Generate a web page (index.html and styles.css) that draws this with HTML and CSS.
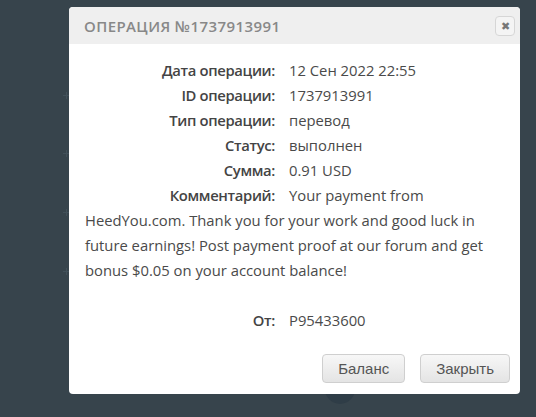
FILE: index.html
```html
<!DOCTYPE html>
<html lang="ru">
<head>
    <meta charset="UTF-8">
    <title>Операция</title>
    <link rel="stylesheet" href="styles.css">
</head>
<body>
    <div class="backdrop">
        <div class="dot"></div>
        <div class="plus" style="top: 92px"></div>
        <div class="plus" style="top: 150px"></div>
        <div class="plus" style="top: 209px"></div>
        <div class="plus" style="top: 268px"></div>

        <div class="dialog">
            <div class="dialog-head">
                <span class="dialog-title">Операция №1737913991</span>
                <button class="close-btn">&#10006;</button>
            </div>
            <div class="dialog-body">
                <div class="row"><span class="label">Дата операции:</span>12 Сен 2022 22:55</div>
                <div class="row"><span class="label">ID операции:</span>1737913991</div>
                <div class="row"><span class="label">Тип операции:</span>перевод</div>
                <div class="row"><span class="label">Статус:</span>выполнен</div>
                <div class="row"><span class="label">Сумма:</span>0.91 USD</div>
                <div class="row"><span class="label">Комментарий:</span>Your payment from HeedYou.com. Thank you for your work and good luck in future earnings! Post payment proof at our forum and get bonus $0.05 on your account balance!</div>
                <div class="row empty"></div>
                <div class="row"><span class="label">От:</span>P95433600</div>
            </div>
            <div class="dialog-foot">
                <button class="btn">Баланс</button>
                <button class="btn">Закрыть</button>
            </div>
        </div>
    </div>
</body>
</html>
```

FILE: styles.css
```css
body {
    margin: 0;
    background-color: #37444c;
    font-family: "Open Sans", "DejaVu Sans", sans-serif;
}
.backdrop {
    position: relative;
    width: 536px;
    height: 417px;
    overflow: hidden;
    padding-top: 7px;
    box-sizing: border-box;
}
.dot {
    position: absolute;
    left: 325px;
    top: 374px;
    width: 30px;
    height: 30px;
    border-radius: 50%;
    background-color: #2f3d47;
}
.plus {
    position: absolute;
    left: 63px;
    width: 7px;
    height: 7px;
    background:
        linear-gradient(#42515a, #42515a) center / 7px 1px no-repeat,
        linear-gradient(#42515a, #42515a) center / 1px 7px no-repeat;
}
.dialog {
    position: relative;
    margin-left: 69px;
    width: 451px;
    background-color: #fff;
    border-radius: 4px;
    overflow: hidden;
}
.dialog-head {
    background-color: #efefef;
    height: 37px;
    display: flex;
    align-items: center;
    justify-content: space-between;
    padding: 0 5px 0 15px;
}
.dialog-title {
    text-transform: uppercase;
    color: #888;
    font-size: 15px;
    font-weight: 600;
    letter-spacing: 0.4px;
}
.close-btn {
    width: 20px;
    height: 20px;
    padding: 0;
    border: 1px solid #d6d6d6;
    border-radius: 4px;
    background-color: #f4f4f4;
    color: #777;
    font-size: 11px;
    line-height: 18px;
}
.dialog-body {
    padding: 14px 16px 0 16px;
    font-size: 14.8px;
    line-height: 25px;
    color: #4a4a4a;
}
.row.empty {
    height: 25px;
}
.label {
    display: inline-block;
    width: 190px;
    margin-right: 14px;
    text-align: right;
    font-weight: 600;
    letter-spacing: -0.35px;
    color: #444;
}
.dialog-foot {
    display: flex;
    justify-content: flex-end;
    gap: 15px;
    padding: 21px 10px 11px 0;
}
.btn {
    height: 29px;
    padding: 0 15px;
    font-family: "Liberation Sans", Arial, sans-serif;
    font-size: 15px;
    color: #555;
    border: 1px solid #cfcfcf;
    border-radius: 4px;
    background: linear-gradient(#f7f7f7, #e4e4e4);
}
```
